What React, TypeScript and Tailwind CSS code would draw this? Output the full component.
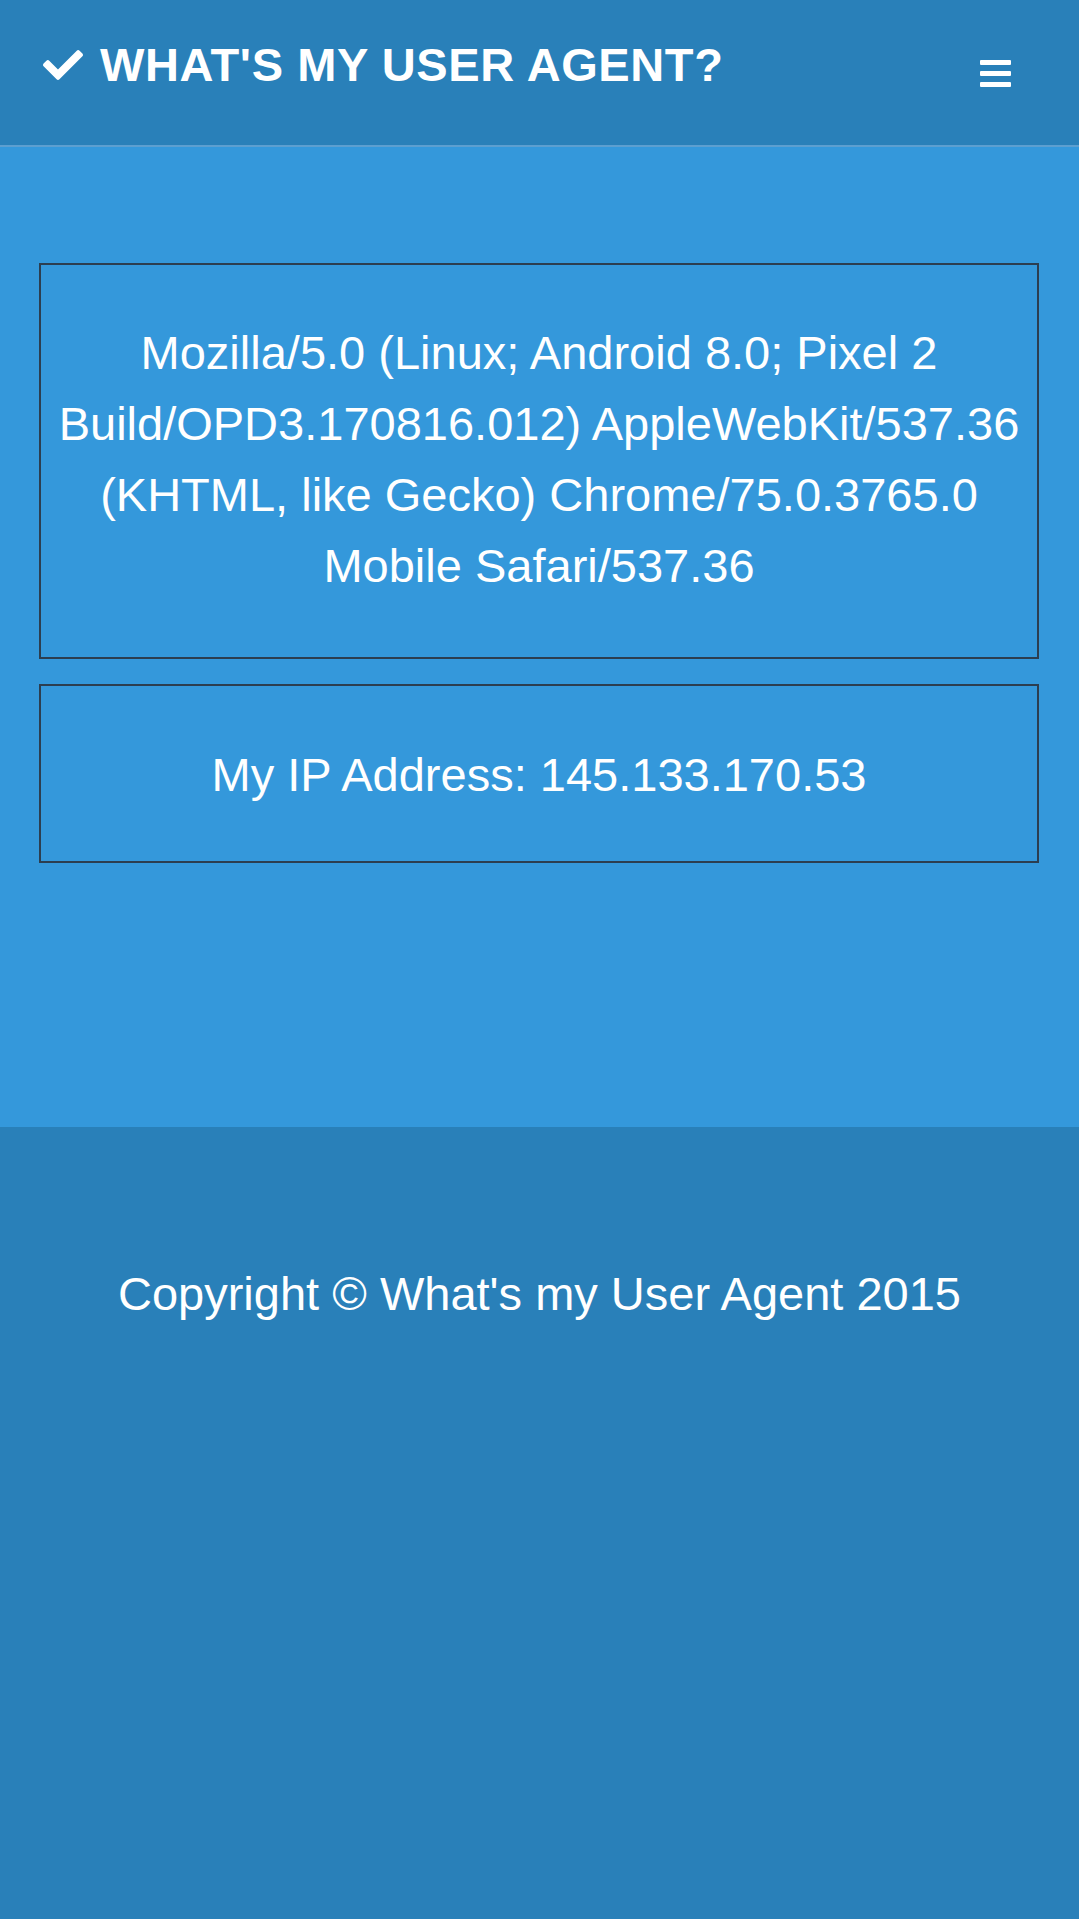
import { FaCheck } from 'react-icons/fa';

const font = { fontFamily: '"Liberation Sans", Arial, sans-serif' };

export default function App() {
    return (
        <div className="min-h-screen flex flex-col bg-[#2980b9] text-white" style={font}>
            {/* Navbar */}
            <header className="h-[147px] shrink-0 flex items-start justify-between bg-[#2980b9] border-b-2 border-[#5c9fd0] pl-[43px] pr-[68px]">
                <div className="mt-[41px] h-[47px] flex items-center">
                    <FaCheck className="w-[40px] h-[40px] text-white" />
                    <span className="ml-[17px] text-[47px] leading-[47px] font-bold uppercase tracking-[0.6px]">What's my user agent?</span>
                </div>
                <button className="mt-[60px] flex flex-col gap-[6px]">
                    <span className="block w-[31px] h-[5px] bg-white rounded-[1px]" />
                    <span className="block w-[31px] h-[5px] bg-white rounded-[1px]" />
                    <span className="block w-[31px] h-[5px] bg-white rounded-[1px]" />
                </button>
            </header>

            {/* Main */}
            <main className="bg-[#3498db] pt-[116px] pb-[264px] pl-[39px] pr-[40px] flex flex-col gap-[25px]">
                <div className="border-2 border-[#2c3e50] pt-[52px] pb-[56px] px-2 text-center text-[47px] leading-[71px]">
                    Mozilla/5.0 (Linux; Android 8.0; Pixel 2 Build/OPD3.170816.012) AppleWebKit/537.36 (KHTML, like Gecko) Chrome/75.0.3765.0 Mobile Safari/537.36
                </div>
                <div className="border-2 border-[#2c3e50] pt-[53px] pb-[51px] px-2 text-center text-[47px] leading-[71px]">
                    My IP Address: 145.133.170.53
                </div>
            </main>

            {/* Footer */}
            <footer className="flex-1 bg-[#2980b9] pt-[131px] text-center text-[47px] leading-[71px]">
                Copyright © What's my User Agent 2015
            </footer>
        </div>
    );
}
